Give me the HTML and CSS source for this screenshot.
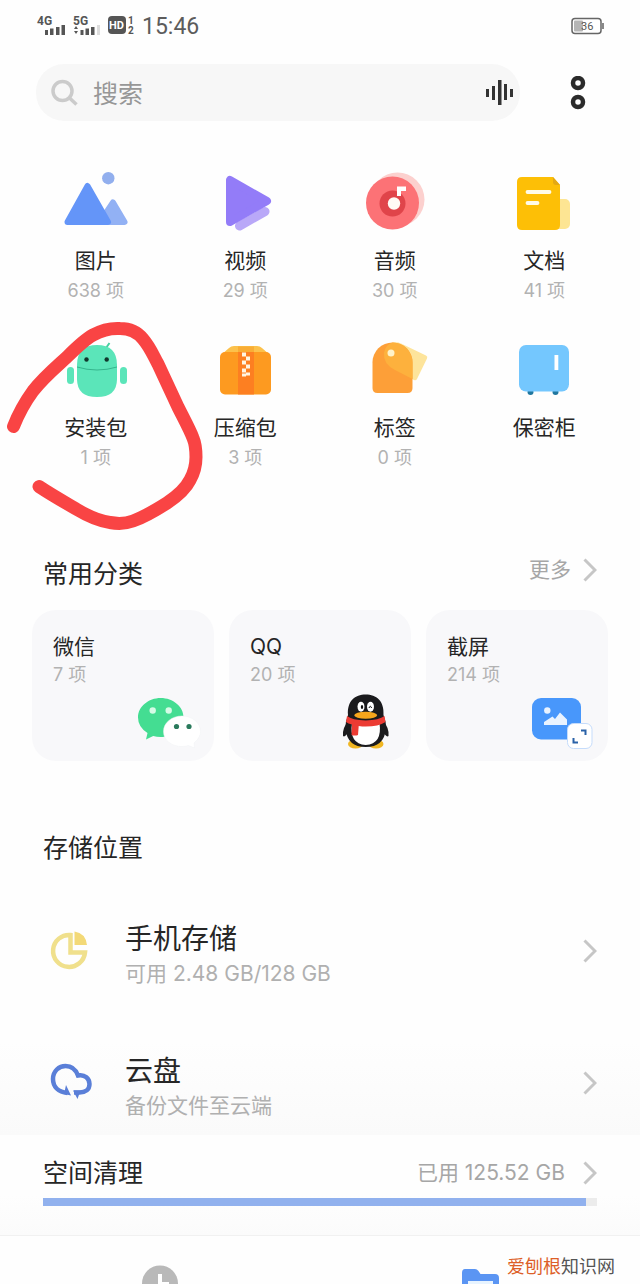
FILE: index.html
```
<!DOCTYPE html>
<html lang="zh-CN">
<head>
<meta charset="UTF-8" />
<meta name="viewport" content="width=device-width, initial-scale=1" />
<title>文件管理</title>
<link rel="stylesheet" href="styles.css">
</head>
<body>

<div class="status">
  <svg class="signal" width="30" height="22" viewBox="0 0 30 22">
    <text x="1" y="10">4G</text>
    <path d="M9 15h3v5H9zM14 13.500h3.500v6.500H14zM20 12h3.500v8H20zM25.500 10h3.500v10h-3.500z"/>
  </svg>
  <svg class="signal" width="30" height="22" viewBox="0 0 30 22">
    <text x="1" y="10">5G</text>
    <path d="M2 14l2-3 2 3zM2 16h4l-2 3zM8.500 15h3v5h-3zM13.500 13.500H17v6.500h-3.500zM19 12h3.500v8H19z"/>
    <path class="off" d="M25 10h3v10h-3z"/>
  </svg>
  <svg class="signal" width="28" height="22" viewBox="0 0 28 22">
    <rect x="0" y="1" width="18" height="18" rx="4"/>
    <text class="hd" x="1" y="14">HD</text>
    <text class="sim" x="20" y="9">1</text>
    <text class="sim" x="20" y="19">2</text>
  </svg>
  <span class="time">15:46</span>
  <svg class="battery" width="34" height="18" viewBox="0 0 34 18">
    <rect x="1" y="1.500" width="29" height="15" rx="3" fill="#fff" stroke="#666" stroke-width="1.500"/>
    <rect x="3" y="3.500" width="9" height="11" rx="1" fill="#b5b5b5"/>
    <path d="M31 6h2v6h-2z" fill="#888"/>
    <text x="10" y="13">36</text>
  </svg>
</div>

<header class="top">
  <div class="search">
    <svg width="27" height="27" viewBox="0 0 27 27" fill="none" stroke="#cbcbcb" stroke-width="3.500">
      <circle cx="11.500" cy="12" r="9.500"/>
      <path d="M18.500 19l7 6.500"/>
    </svg>
    <input type="text" placeholder="搜索" aria-label="搜索">
    <button class="voice" aria-label="语音">
      <svg width="28" height="26" viewBox="0 0 28 26" fill="#333">
        <path d="M0 9h3v8H0zM6 6h3v14H6zM12 0h3.500v25H12zM18 4h3v16h-3zM24 9h3v8h-3z"/>
      </svg>
    </button>
  </div>
  <button class="menu" aria-label="菜单">
    <svg width="16" height="34" viewBox="0 0 16 34" fill="none" stroke="#2b2b2b" stroke-width="4.500">
      <circle cx="8" cy="7" r="5"/>
      <circle cx="8" cy="26" r="5"/>
    </svg>
  </button>
</header>

<main>
  <div class="grid">
    <button class="tile">
      <svg width="68" height="66" viewBox="0 0 68 66" stroke-linejoin="round" stroke-width="6">
        <circle cx="46.300" cy="10.200" r="6.200" fill="#92afee"/>
        <path d="M38 54l13-19.500L62.500 54z" fill="#92b1f4" stroke="#92b1f4"/>
        <path d="M5.500 54L25.500 18 46 54z" fill="#6495f8" stroke="#6495f8"/>
      </svg>
      <span class="name">图片</span>
      <span class="count">638 项</span>
    </button>
    <button class="tile">
      <svg width="68" height="66" viewBox="0 0 68 66" stroke-linejoin="round" stroke-linecap="round">
        <path d="M28.500 58L54 43.500" stroke="#b9a8f8" stroke-width="9"/>
        <path d="M19 12v42l37-21z" fill="#937cf8" stroke="#937cf8" stroke-width="8"/>
      </svg>
      <span class="name">视频</span>
      <span class="count">29 项</span>
    </button>
    <button class="tile">
      <svg width="68" height="66" viewBox="0 0 68 66">
        <circle cx="36.500" cy="31.500" r="27" fill="#fcd0ce"/>
        <circle cx="31.500" cy="35" r="26.500" fill="#fc7276"/>
        <circle cx="31.500" cy="35.500" r="13" fill="#e0444a"/>
        <circle cx="33" cy="35.500" r="6.200" fill="#fffaf5"/>
        <path d="M36 28v-9.500h9V23h-5v5z" fill="#fff"/>
      </svg>
      <span class="name">音频</span>
      <span class="count">30 项</span>
    </button>
    <button class="tile">
      <svg width="68" height="66" viewBox="0 0 68 66">
        <rect x="40" y="31" width="20" height="30" rx="5" fill="#fde593"/>
        <path d="M12 9h31l7 8v40q0 5-5 5H12q-5 0-5-5V14q0-5 5-5z" fill="#fdbf06"/>
        <path d="M43 9l7 8h-4q-3 0-3-3z" fill="#e3a814"/>
        <path d="M17.500 24h22M17.500 35h10" stroke="#fffbe8" stroke-width="3.800" stroke-linecap="round"/>
      </svg>
      <span class="name">文档</span>
      <span class="count">41 项</span>
    </button>
    <button class="tile">
      <svg width="68" height="66" viewBox="0 0 68 66" fill="#5be5b9">
        <path d="M44 13l3.500-5M26 13l-3.500-5" stroke="#48cfa2" stroke-width="2"/>
        <path d="M15 30q0-20 20-20t20 20v14q0 18-20 18T15 44z"/>
        <rect x="5" y="32" width="7" height="17" rx="3.500"/>
        <rect x="58" y="32" width="7" height="17" rx="3.500"/>
        <path d="M15 32q20 6 40 0" fill="none" stroke="#35b58d"/>
        <circle cx="24.500" cy="24.500" r="2.200" fill="#12372d"/>
        <circle cx="44.700" cy="24.500" r="2.200" fill="#12372d"/>
      </svg>
      <span class="name">安装包</span>
      <span class="count">1 项</span>
    </button>
    <button class="tile">
      <svg width="68" height="66" viewBox="0 0 68 66">
        <path d="M10 20l8-7q2-2 5-2h23q3 0 5 2l8 7z" fill="#fcc14b"/>
        <rect x="9" y="17" width="51" height="42.500" rx="5" fill="#fd9a20"/>
        <path d="M27 17h16v42.500H27z" fill="#fd7f21"/>
        <path d="M27 11.500h16V17H27z" fill="#f9ad35"/>
        <path d="M31 17.500h4v4h-4zM35 21.500h4v4h-4zM31 25.500h4v4h-4zM35 29.500h4v4h-4zM31 33.500h4v4h-4zM35 37.500h4v3h-4zM31 38.500h4v3h-4z" fill="#fff5e2"/>
      </svg>
      <span class="name">压缩包</span>
      <span class="count">3 项</span>
    </button>
    <button class="tile">
      <svg width="68" height="66" viewBox="0 0 68 66">
        <path d="M32 7.500q4-1 8 1l25 12q2 1 1 3L56 44q-1 2-3 1l-10-5z" fill="#fde49b"/>
        <path d="M11.500 27.500a20 20 0 0 1 40 0V53q0 5-5 5h-30q-5 0-5-5z" fill="#fd9f38"/>
        <path d="M31.500 7.500a20 20 0 0 1 20 20v16.500L34 35q-12-6-11-17 1-8 8.500-10.500z" fill="#fdb13d"/>
        <circle cx="30" cy="18" r="3.500" fill="#fff3c9"/>
      </svg>
      <span class="name">标签</span>
      <span class="count">0 项</span>
    </button>
    <button class="tile">
      <svg width="68" height="66" viewBox="0 0 68 66">
        <circle cx="20.500" cy="57" r="3" fill="#20779f"/>
        <circle cx="45.500" cy="57" r="3" fill="#20779f"/>
        <rect x="9" y="10" width="50" height="46.500" rx="7" fill="#74c7fe"/>
        <rect x="44.500" y="20" width="3.800" height="15" fill="#fff"/>
      </svg>
      <span class="name">保密柜</span>
    </button>
  </div>

  <div class="section-head">
    <h2>常用分类</h2>
    <a href="#">更多
      <svg class="chevron" width="14" height="24" viewBox="0 0 14 24"><path d="M1.500 1.500L12 12 1.500 22.500"/></svg>
    </a>
  </div>

  <div class="cards">
    <button class="card">
      <span class="name">微信</span>
      <span class="count">7 项</span>
      <svg width="68" height="60" viewBox="0 0 68 60">
        <path d="M24.700 6C37 6 47.500 14.500 47.500 25.500S37 45 24.700 45q-4 0-7.500-1L10 47.500l1.500-6.500Q2 35 2 25.500C2 14.500 12.500 6 24.700 6z" fill="#44dd92"/>
        <circle cx="16.700" cy="18.500" r="3.200" fill="#d5fbe6"/>
        <circle cx="32.700" cy="18.500" r="3.200" fill="#d5fbe6"/>
        <path d="M46 24c10 0 18.500 6.500 18.500 15.500 0 4.500-3 8.500-6.500 11.500l.5 5-6-2.500q-3 1-6.500 1c-10 0-18.500-6-18.500-15S36 24 46 24z" fill="#fff" stroke="#f1f2f4" stroke-width=".5"/>
        <circle cx="40.500" cy="34.500" r="2.600" fill="#2a7a5c"/>
        <circle cx="53" cy="34.500" r="2.600" fill="#2a7a5c"/>
      </svg>
    </button>
    <button class="card">
      <span class="name">QQ</span>
      <span class="count">20 项</span>
      <svg width="68" height="60" viewBox="0 0 68 60">
        <ellipse cx="22.500" cy="52" rx="7.500" ry="4.500" fill="#f0b622"/>
        <ellipse cx="43" cy="52" rx="7.500" ry="4.500" fill="#f0b622"/>
        <path d="M16 28Q9 36 10 44q2 2 6-5zM49.500 28q7 8 6 16-2 2-6-5z" fill="#1b1b1d"/>
        <path d="M15 23C14 9 22 2.500 32.700 2.500S51.500 9 50.500 23q3 7 2.500 14-2 18-20.300 18T12.500 37q-.5-7 2.500-14z" fill="#1b1b1d"/>
        <path d="M19 31q13.500 5 27.500 0 3 21-13.800 22Q16 52 19 31z" fill="#fff"/>
        <ellipse cx="28" cy="14.700" rx="3.500" ry="5" fill="#fff"/>
        <ellipse cx="37.500" cy="14.700" rx="3.500" ry="5" fill="#fff"/>
        <ellipse cx="29" cy="15" rx="1.200" ry="2" fill="#111"/>
        <path d="M36 16q1.300-3.500 2.600 0" fill="none" stroke="#111"/>
        <ellipse cx="32.700" cy="23.300" rx="11.500" ry="3.500" fill="#f6a61c"/>
        <path d="M14 24q5 4 18.700 4.500Q46 28 51.500 24l1 6q-7 4.500-19.800 4.500-3.500 0-7-.5l-.7 9q-3 1-6.500 0l.5-10.500q-4-1-6-2.500z" fill="#ec3b33"/>
      </svg>
    </button>
    <button class="card">
      <span class="name">截屏</span>
      <span class="count">214 项</span>
      <svg width="68" height="60" viewBox="0 0 68 60">
        <rect x="2" y="6" width="49" height="41.500" rx="9" fill="#4897fb"/>
        <circle cx="17.300" cy="18.500" r="3.200" fill="#e9f3ff"/>
        <path d="M14 33v-3l8.500-5.500 2.500 2.500 5-6.500 7 7V33z" fill="#e9f3ff"/>
        <rect x="37.500" y="31.500" width="24.500" height="25" rx="6" fill="#fff" stroke="#c5dcfb"/>
        <path d="M51 38.500h4.500V43M43.500 46v4.500H48" fill="none" stroke="#2a62a8" stroke-width="2"/>
      </svg>
    </button>
  </div>

  <h2 class="storage-title">存储位置</h2>

  <div class="storage">
    <a class="row" href="#">
      <svg class="icon" width="44" height="44" viewBox="0 0 44 44">
        <path d="M21.500 6A16 16 0 1 0 36 23.500H21.500z" fill="none" stroke="#f0e08c" stroke-width="4.500"/>
        <path d="M25.500 2.500q11 1.500 12.500 13.500H25.500z" fill="#f3d977"/>
      </svg>
      <span class="text">
        <span class="row-title">手机存储</span>
        <span class="row-sub">可用 2.48 GB/128 GB</span>
      </span>
      <svg class="chevron" width="14" height="24" viewBox="0 0 14 24"><path d="M1.500 1.500L12 12 1.500 22.500"/></svg>
    </a>
    <a class="row" href="#">
      <svg class="icon" width="44" height="44" viewBox="0 0 44 44">
        <path d="M18.500 32C9 31 4 25.500 4 18 4 10 10 5 16.500 5 23 5 27 9 29 14.500c7-1.500 11.500 3.500 11.500 8.500 0 5.500-4 8.500-10 8.500H25" fill="none" stroke="#5a7fd8" stroke-width="4.500"/>
        <path d="M17 24l5 10.500-7-1.500zM24 29.500h7.500L28.500 38z" fill="#5a7fd8"/>
      </svg>
      <span class="text">
        <span class="row-title">云盘</span>
        <span class="row-sub">备份文件至云端</span>
      </span>
      <svg class="chevron" width="14" height="24" viewBox="0 0 14 24"><path d="M1.500 1.500L12 12 1.500 22.500"/></svg>
    </a>
  </div>
</main>

<section class="clean">
  <a class="clean-head" href="#">
    <span class="clean-title">空间清理</span>
    <span class="used">已用 125.52 GB</span>
    <svg class="chevron" width="14" height="24" viewBox="0 0 14 24"><path d="M1.500 1.500L12 12 1.500 22.500"/></svg>
  </a>
  <div class="bar"><div class="fill" style="width: 98%"></div></div>
</section>

<nav class="tabs">
  <button aria-label="最近">
    <svg width="40" height="40" viewBox="0 0 40 40">
      <circle cx="20" cy="20.500" r="18" fill="#b9b9b9"/>
      <path d="M20 11v10h9" fill="none" stroke="#fff" stroke-width="4"/>
    </svg>
  </button>
  <button aria-label="文件">
    <svg width="40" height="40" viewBox="0 0 40 40">
      <path d="M5 6h10q2 0 3.500 2l2 3H35q4 0 4 4v20H2V10q0-4 3-4z" fill="#5b95f3"/>
      <path d="M8 18h25v20H8z" fill="#e8f4ff"/>
    </svg>
  </button>
  <span class="watermark"><b>爱刨根</b>知识网</span>
</nav>

<!-- red pen stroke round the apk tile -->
<svg class="marker" width="210" height="220" viewBox="0 0 210 220">
  <path d="M13.500 112.500C18 101 25 88 33 77 43 64 55 54 67 43 76 34 84 26 93 21c9-5 18-7 27-6.500 9 0 17 3 23 10.500 7 8 10 16 15 25l20 43c6 12 12 23 15 31 3 7 3 13 3 19 0 8-2 16-6 23-5 10-14 17-23 23-11 7-23 14-34 18-8 3-15 3-23 1.500-12-1.500-23-7-33-13-12-7-26-15-38-23"/>
</svg>

</body>
</html>
```
FILE: styles.css
```
* { box-sizing: border-box; }
body {
  margin: 0; position: relative; background: #fefefe; color: #262626;
  font-family: Inter, "Noto Sans CJK SC", sans-serif;
}
button { border: 0; padding: 0; background: none; font: inherit; color: inherit; cursor: pointer; }
a { color: inherit; text-decoration: none; }
svg { display: block; flex-shrink: 0; }
h2 { margin: 0; font-size: 25px; line-height: 38px; font-weight: 400; }
.chevron { fill: none; stroke: #c6c6c6; stroke-width: 3; }

/* status bar */
.status { display: flex; align-items: center; gap: 6px; height: 52px; padding: 0 35px 0 36px; }
.signal { fill: #555; font: bold 12px Roboto, sans-serif; }
.signal .off { fill: #ddd; }
.signal .hd { fill: #fff; font-size: 11px; }
.signal .sim { font-size: 10px; }
.time { padding-top: 2px; font: 23px/30px Roboto, sans-serif; color: #5c5c5c; }
.battery { margin-left: auto; font: 11px Roboto, sans-serif; fill: #555; }

/* search */
.top { display: flex; align-items: center; padding: 12px 36px 0; }
.search {
  flex: 1; display: flex; align-items: center; height: 57px; min-width: 0;
  padding: 0 6px 0 15px; border-radius: 28px; background: #f7f7f7;
}
.search input {
  flex: 1; min-width: 0; padding: 2px 0 0 15px; border: 0; outline: 0; background: none;
  font: 25px/36px Inter, "Noto Sans CJK SC", sans-serif;
}
.search input::placeholder { color: #979797; }
.menu { margin: 0 18px 0 50px; }

/* file types */
.grid { display: grid; grid-template-columns: repeat(4, 1fr); row-gap: 29px; padding: 47px 21px 0; }
.tile { display: flex; flex-direction: column; align-items: center; }
.tile svg { margin-bottom: 12px; }
.name { font-size: 21px; line-height: 30px; }
.count { font-size: 18px; line-height: 30px; color: #b2b2b2; }

/* common folders */
.section-head { display: flex; justify-content: space-between; align-items: flex-start; padding: 0 43px; margin: 82px 0 17px; }
.section-head a { display: flex; align-items: center; gap: 12px; font-size: 21px; line-height: 30px; color: #a6a6a6; }
.cards { display: grid; grid-template-columns: repeat(3, 1fr); gap: 15px; padding: 0 32px; }
.card {
  display: flex; flex-direction: column; align-items: flex-start;
  padding: 23px 10px 9px 21px; border-radius: 24px; background: #f8f8fa;
}
.card .name, .card .count { line-height: 28px; }
.card svg { align-self: flex-end; margin-top: 3px; }

/* storage */
.storage-title { margin: 68px 43px 0; }
.storage {
  display: flex; flex-direction: column; gap: 62px; padding: 52px 43px 14px 49px;
  background: linear-gradient(#fefefe 65%, #fafafa);
}
.row { display: flex; align-items: center; }
.row .icon, .row .chevron { margin-bottom: 6px; }
.text { flex: 1; display: flex; flex-direction: column; padding-left: 32px; }
.row-title { font-size: 28px; line-height: 40px; }
.row-sub { font-size: 21px; line-height: 30px; color: #b0b0b0; }

/* space cleaning */
.clean { padding: 19px 43px 29px; background: linear-gradient(#fefefe 60%, #fbfbfb); }
.clean-head { display: flex; align-items: center; margin-bottom: 6px; }
.clean-title { flex: 1; font-size: 25px; line-height: 38px; }
.used { margin-right: 18px; font-size: 21px; line-height: 30px; color: #a6a6a6; }
.bar { height: 8px; background: #ececec; }
.fill { height: 8px; background: #91b1ee; }

/* bottom tabs */
.tabs { position: relative; display: flex; height: 50px; overflow: hidden; border-top: 1px solid #f1f1f1; background: #fefefe; }
.tabs button { flex: 1; display: flex; justify-content: center; padding-top: 27px; }
.watermark { position: absolute; right: 25px; top: 18px; font-size: 18px; line-height: 26px; color: #555; }
.watermark b { font-weight: 400; color: #dd5f28; }

.marker { position: absolute; left: 0; top: 314px; fill: none; stroke: #f94444; stroke-width: 13; stroke-linecap: round; stroke-linejoin: round; pointer-events: none; }
```
